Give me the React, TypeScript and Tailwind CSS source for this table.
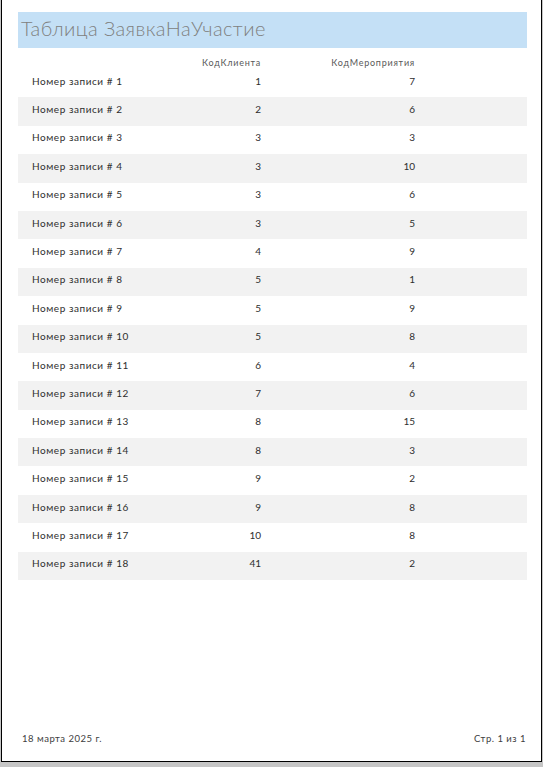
const rows = [
  [1, 7],
  [2, 6],
  [3, 3],
  [3, 10],
  [3, 6],
  [3, 5],
  [4, 9],
  [5, 1],
  [5, 9],
  [5, 8],
  [6, 4],
  [7, 6],
  [8, 15],
  [8, 3],
  [9, 2],
  [9, 8],
  [10, 8],
  [41, 2],
];

export default function App() {
  return (
    <div className="w-[543px] h-[767px] bg-[#c6c6c6] overflow-hidden" style={{ fontFamily: '"Lato", "Noto Sans", sans-serif' }}>
      <div className="ml-px w-[541px] h-[762px] bg-white border-x border-b border-black flex flex-col">
        <div className="mt-[12px] ml-[16px] w-[509px] h-[36px] bg-[#c4e0f6] flex items-center pl-[3px] pb-[4px]">
          <span className="text-[20px] font-light text-[#808080] tracking-[0.4px]">Таблица ЗаявкаНаУчастие</span>
        </div>

        <div className="ml-[16px] w-[509px] flex h-[21px] items-end text-[9px] text-[#595959] tracking-[0.75px]">
          <div className="w-[243px] text-right">КодКлиента</div>
          <div className="w-[154px] text-right">КодМероприятия</div>
        </div>

        <div className="ml-[16px] w-[509px] flex flex-col">
          {rows.map(([client, event], i) => (
            <div
              key={i}
              className={`flex h-[28.4px] items-center text-[10px] text-[#2e2e2e] ${i % 2 === 1 ? 'bg-[#f2f2f2]' : ''}`}
            >
              <div className="w-[110px] pl-[14px] pb-[4px] tracking-[0.55px] whitespace-nowrap">Номер записи # {i + 1}</div>
              <div className="w-[133px] text-right pb-[4px]">{client}</div>
              <div className="w-[154px] text-right pb-[4px]">{event}</div>
            </div>
          ))}
        </div>

        <div className="mt-auto mb-[15px] mx-[15px] flex justify-between text-[9.5px] text-[#404040] tracking-[0.5px]">
          <span className="pl-[5px]">18 марта 2025 г.</span>
          <span>Стр. 1 из 1</span>
        </div>
      </div>
    </div>
  );
}
